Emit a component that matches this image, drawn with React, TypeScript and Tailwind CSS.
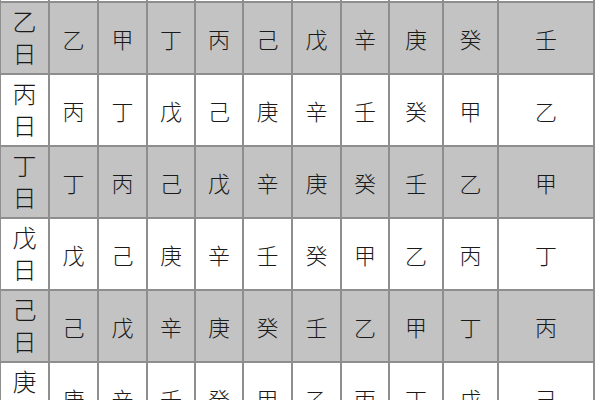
import React from "react";

const rows: { head: [string, string]; cells: string[]; gray: boolean }[] = [
  { head: ["乙", "日"], cells: ["乙", "甲", "丁", "丙", "己", "戊", "辛", "庚", "癸", "壬"], gray: true },
  { head: ["丙", "日"], cells: ["丙", "丁", "戊", "己", "庚", "辛", "壬", "癸", "甲", "乙"], gray: false },
  { head: ["丁", "日"], cells: ["丁", "丙", "己", "戊", "辛", "庚", "癸", "壬", "乙", "甲"], gray: true },
  { head: ["戊", "日"], cells: ["戊", "己", "庚", "辛", "壬", "癸", "甲", "乙", "丙", "丁"], gray: false },
  { head: ["己", "日"], cells: ["己", "戊", "辛", "庚", "癸", "壬", "乙", "甲", "丁", "丙"], gray: true },
  { head: ["庚", "日"], cells: ["庚", "辛", "壬", "癸", "甲", "乙", "丙", "丁", "戊", "己"], gray: false },
];

const font = { fontFamily: '"Noto Sans CJK SC", "Noto Sans CJK JP", sans-serif' };

export default function App() {
  return (
    <div className="w-[600px] h-[400px] overflow-hidden bg-white">
      <div
        className="w-[595px] grid grid-cols-[47px_47px_47px_46px_46px_47px_47px_46px_52px_53px_94px] grid-rows-[1px_70px_70px_70px_70px_70px_70px] gap-[2px] bg-[#8e8e8e] pl-[1px] pr-[2px] text-[#1a1a1a]"
        style={font}
      >
        {Array.from({ length: 11 }).map((_, i) => (
          <div key={"top" + i} className="bg-white" />
        ))}
        {rows.map((r, ri) => (
          <React.Fragment key={ri}>
            <div
              className={`${r.gray ? "bg-[#c3c3c3]" : "bg-white"} flex flex-col items-center justify-center pb-[3px] text-[24px] leading-[32px] font-light`}
            >
              <span>{r.head[0]}</span>
              <span>{r.head[1]}</span>
            </div>
            {r.cells.map((c, ci) => (
              <div
                key={ci}
                className={`${r.gray ? "bg-[#c3c3c3]" : "bg-white"} flex items-center justify-center text-[22px] font-light`}
              >
                {c}
              </div>
            ))}
          </React.Fragment>
        ))}
      </div>
    </div>
  );
}
